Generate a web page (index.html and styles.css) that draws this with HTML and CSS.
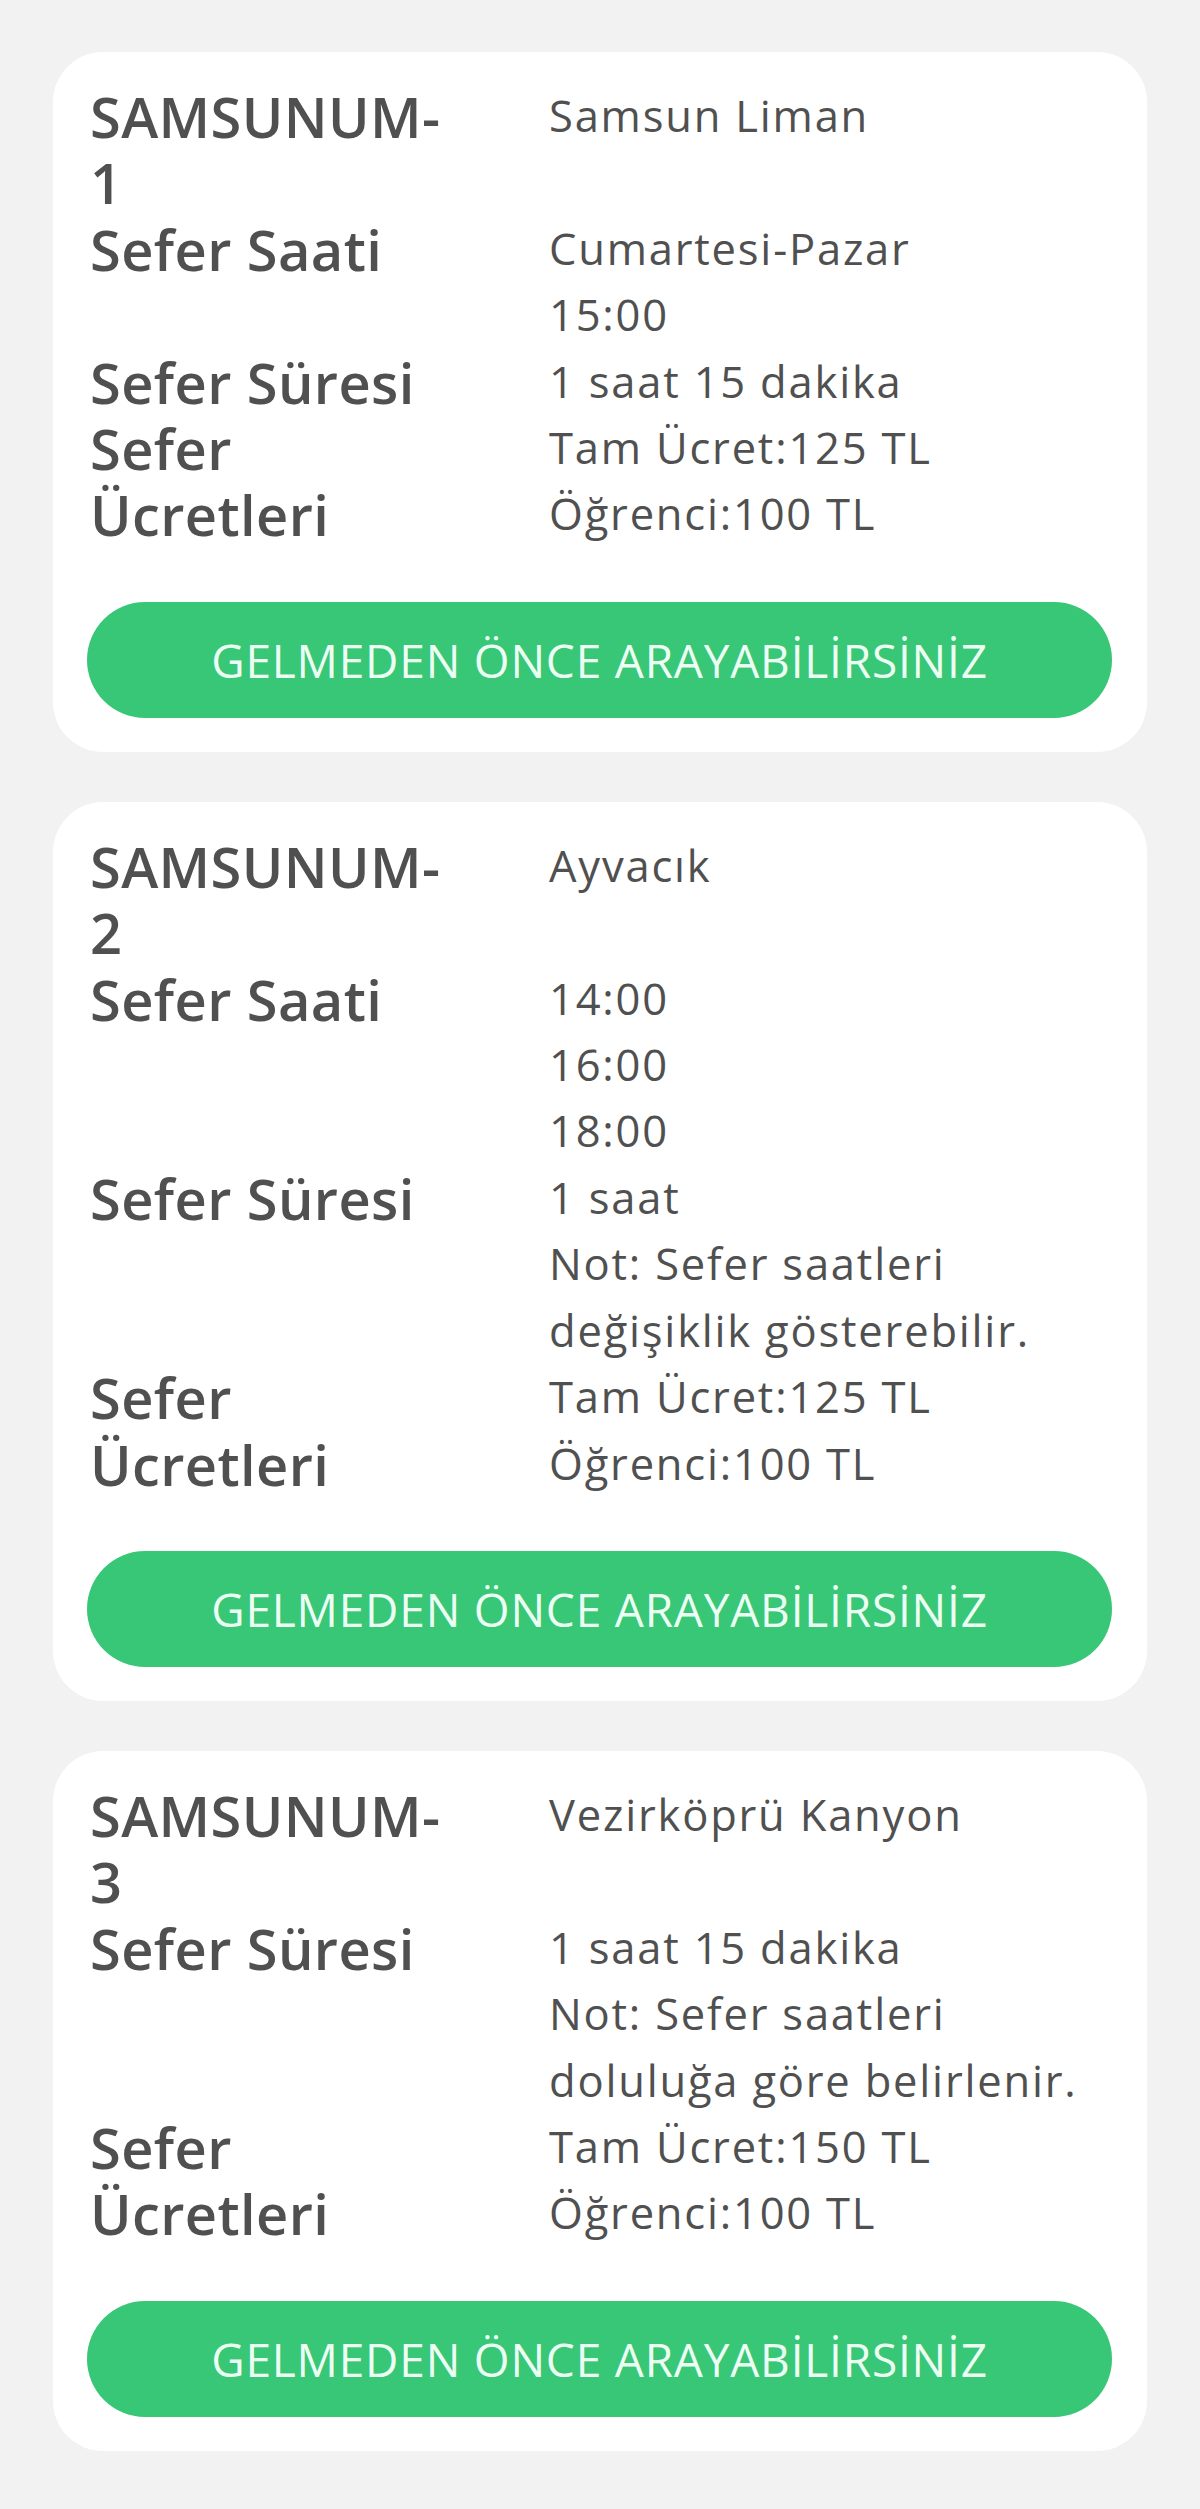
FILE: index.html
```html
<!DOCTYPE html>
<html lang="tr">
  <head>
    <meta charset="UTF-8" />
    <meta name="viewport" content="width=device-width, initial-scale=1.0" />
    <title>Samsunum Seferleri</title>
    <link rel="stylesheet" href="styles.css">
  </head>
  <body>
    <div class="list">
      <div class="card">
        <div class="info">
          <div class="label">SAMSUNUM-1</div>
          <div class="value">Samsun Liman</div>
          <div class="label">Sefer Saati</div>
          <div class="value">Cumartesi-Pazar<br />15:00</div>
          <div class="label">Sefer Süresi</div>
          <div class="value">1 saat 15 dakika</div>
          <div class="label">Sefer Ücretleri</div>
          <div class="value">Tam Ücret:125 TL<br />Öğrenci:100 TL</div>
        </div>
        <button class="btn">GELMEDEN ÖNCE ARAYABİLİRSİNİZ</button>
      </div>

      <div class="card">
        <div class="info">
          <div class="label">SAMSUNUM-2</div>
          <div class="value">Ayvacık</div>
          <div class="label">Sefer Saati</div>
          <div class="value">14:00<br />16:00<br />18:00</div>
          <div class="label">Sefer Süresi</div>
          <div class="value">1 saat<br />Not: Sefer saatleri değişiklik gösterebilir.</div>
          <div class="label">Sefer Ücretleri</div>
          <div class="value">Tam Ücret:125 TL<br />Öğrenci:100 TL</div>
        </div>
        <button class="btn">GELMEDEN ÖNCE ARAYABİLİRSİNİZ</button>
      </div>

      <div class="card">
        <div class="info">
          <div class="label">SAMSUNUM-3</div>
          <div class="value">Vezirköprü Kanyon</div>
          <div class="label">Sefer Süresi</div>
          <div class="value">1 saat 15 dakika<br />Not: Sefer saatleri doluluğa göre belirlenir.</div>
          <div class="label">Sefer Ücretleri</div>
          <div class="value">Tam Ücret:150 TL<br />Öğrenci:100 TL</div>
        </div>
        <button class="btn">GELMEDEN ÖNCE ARAYABİLİRSİNİZ</button>
      </div>
    </div>
  </body>
</html>
```

FILE: styles.css
```css
* {
  padding: 0;
  margin: 0;
  box-sizing: border-box;
}
body {
  font-family: "Open Sans", Arial, sans-serif;
  background: #f2f2f2;
  color: #505050;
}
.list {
  display: flex;
  flex-direction: column;
  gap: 50px;
  padding: 52px 53px 58px;
}
.card {
  background: #fff;
  border-radius: 50px;
  padding: 31px 35px 34px 34px;
}
.info {
  display: grid;
  grid-template-columns: 370px 1fr;
  column-gap: 89px;
  padding-left: 3px;
  line-height: 66.4px;
}
.label {
  font-size: 56px;
  font-weight: 600;
  letter-spacing: 0.4px;
}
.value {
  font-size: 43.5px;
  letter-spacing: 1.8px;
}
.btn {
  display: block;
  width: 100%;
  height: 116px;
  margin-top: 54px;
  border: none;
  border-radius: 58px;
  background-color: #38c677;
  color: #ecfff3;
  font-family: "Open Sans", Arial, sans-serif;
  font-size: 46px;
  letter-spacing: 0.8px;
}
```
